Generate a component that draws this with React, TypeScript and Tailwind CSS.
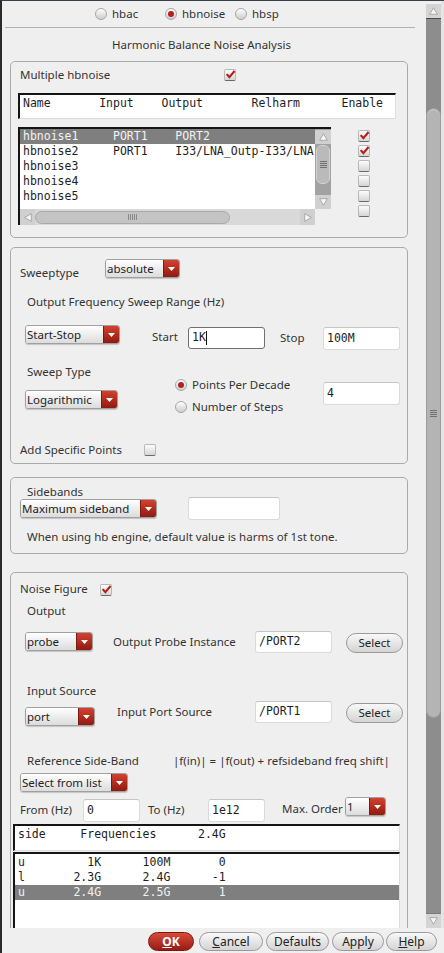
import React from 'react';

const sans = "font-['Noto_Sans',sans-serif] text-[11.5px] text-[#333333]";
const mono = "font-['DejaVu_Sans_Mono',monospace] text-[11.5px]";

function Check({ on = false, className = '' }: { on?: boolean; className?: string }) {
  return (
    <div
      className={`relative w-[12px] h-[12px] shrink-0 rounded-[2px] border border-[#b8b8b8] border-b-[#6a6a6a] bg-linear-to-b from-[#fcfcfc] to-[#d6d6d6] ${className}`}
    >
      {on && (
        <svg viewBox="0 0 12 12" className="absolute left-[0px] top-[-1px] w-[11px] h-[11px]">
          <path d="M1.8 5.6 L4.8 8.8 L10.4 2.2" stroke="#b3201a" strokeWidth="2.3" fill="none" />
        </svg>
      )}
    </div>
  );
}

function Radio({ on = false }: { on?: boolean }) {
  return (
    <div className="w-[12px] h-[12px] shrink-0 rounded-full border border-[#a6a6a6] bg-linear-to-b from-[#ffffff] to-[#cdcdcd] flex items-center justify-center">
      {on && <div className="w-[6px] h-[6px] rounded-full bg-[#b2231b]" />}
    </div>
  );
}

function Drop({ label, className = '' }: { label: string; className?: string }) {
  return (
    <div
      className={`flex h-[19px] shrink-0 rounded-[3px] border border-[#a0a0a0] shadow-[0_1px_1px_rgba(0,0,0,0.18)] overflow-hidden ${className}`}
    >
      <div className="flex-1 min-w-0 pl-[1px] leading-[17px] bg-linear-to-b from-[#ffffff] to-[#dcdcdc] text-[#222] whitespace-nowrap overflow-hidden">
        {label}
      </div>
      <div className="w-[16px] flex items-center justify-center bg-linear-to-b from-[#d4412f] to-[#901a10] border-l border-[#7a1a12]">
        <svg width="7" height="4" viewBox="0 0 7 4">
          <path d="M0 0 H7 L3.5 4 Z" fill="#ffffff" />
        </svg>
      </div>
    </div>
  );
}

function Field({ value = '', className = '', focus = false }: { value?: string; className?: string; focus?: boolean }) {
  return (
    <div
      className={`shrink-0 rounded-[3px] border bg-white flex items-center pl-[3px] text-[#1e1e1e] ${mono} ${
        focus ? 'border-[#707070]' : 'border-[#dadada] border-t-[#c4c4c4]'
      } ${className}`}
    >
      <span className="whitespace-pre">{value}</span>
      {focus && <span className="w-px h-[14px] bg-[#111]" />}
    </div>
  );
}

function Pill({ children, className = '' }: { children: React.ReactNode; className?: string }) {
  return (
    <div
      className={`shrink-0 rounded-full border border-[#9a9a9a] bg-linear-to-b from-[#f9f9f9] to-[#d4d4d4] flex items-center justify-center text-[#222] ${className}`}
    >
      {children}
    </div>
  );
}

function Panel({ className = '', children }: { className?: string; children: React.ReactNode }) {
  return (
    <div className={`ml-[8px] w-[398px] shrink-0 border border-[#aaaaaa] rounded-[5px] flex flex-col ${className}`}>
      {children}
    </div>
  );
}

function Grip() {
  return (
    <div className="flex flex-col gap-[1px]">
      <div className="w-[7px] h-px bg-[#707070]" />
      <div className="w-[7px] h-px bg-[#707070]" />
      <div className="w-[7px] h-px bg-[#707070]" />
      <div className="w-[7px] h-px bg-[#707070]" />
    </div>
  );
}

function UpArrow() {
  return (
    <svg width="9" height="8" viewBox="0 0 9 8">
      <path d="M4.5 0.8 L8.3 7.3 H0.7 Z" fill="#f7f7f7" stroke="#9a9a9a" strokeWidth="0.8" />
    </svg>
  );
}

function DownArrow() {
  return (
    <svg width="9" height="8" viewBox="0 0 9 8">
      <path d="M0.7 0.7 H8.3 L4.5 7.2 Z" fill="#f7f7f7" stroke="#9a9a9a" strokeWidth="0.8" />
    </svg>
  );
}

function MainScroll() {
  return (
    <div className="w-[15px] h-full pt-[3px] flex flex-col">
      <div className="h-[15px] shrink-0 bg-[#d4d4d4] border-b border-[#4a4a4a] flex items-center justify-center">
        <UpArrow />
      </div>
      <div className="flex-1 bg-[#8d8d8d] flex flex-col">
        <div className="mt-[89px] h-[610px] rounded-full bg-[#b4b4b4] border border-[#9c9c9c] shadow-[inset_0_1px_0_#d0d0d0] flex items-center justify-center">
          <Grip />
        </div>
      </div>
      <div className="h-[15px] shrink-0 bg-[#d4d4d4] border-t border-[#7a7a7a] flex items-center justify-center">
        <DownArrow />
      </div>
    </div>
  );
}

const hbRows = [
  'hbnoise1     PORT1    PORT2',
  'hbnoise2     PORT1    I33/LNA_Outp-I33/LNA',
  'hbnoise3',
  'hbnoise4',
  'hbnoise5',
];

const sideRows = [
  'u         1K      100M       0',
  'l       2.3G      2.4G      -1',
  'u       2.4G      2.5G       1',
];

function HbList() {
  return (
    <div className="ml-[7px] w-[313px] h-[98px] shrink-0 bg-white border-t-2 border-l-2 border-t-[#151515] border-l-[#151515] flex flex-col">
      <div className="flex flex-1 min-h-0">
        <div className={`flex-1 min-w-0 overflow-hidden text-[#1e1e1e] ${mono}`}>
          {hbRows.map((r, i) => (
            <div
              key={i}
              className={`h-[15px] leading-[15px] pl-[3px] whitespace-pre ${i === 0 ? 'bg-[#7f7f7f] text-[#f2f2f2]' : ''}`}
            >
              {r}
            </div>
          ))}
        </div>
        <div className="w-[16px] flex flex-col bg-[#a2a2a2]">
          <div className="h-[14px] mt-[1px] bg-[#d0d0d0] flex items-center justify-center">
            <UpArrow />
          </div>
          <div className="mt-[1px] mx-px h-[39px] rounded-[6px] bg-[#bababa] border border-[#d2d2d2] flex items-center justify-center">
            <Grip />
          </div>
          <div className="flex-1" />
          <div className="h-[14px] bg-[#d0d0d0] flex items-center justify-center">
            <DownArrow />
          </div>
        </div>
      </div>
      <div className="flex h-[16px]">
        <div className="flex-1 bg-[#d9d9d9] flex items-center">
          <div className="w-[15px] h-full bg-[#d0d0d0] flex items-center justify-center">
            <svg width="8" height="9" viewBox="0 0 8 9">
              <path d="M0.7 4.5 L7.3 0.7 V8.3 Z" fill="#f7f7f7" stroke="#9a9a9a" strokeWidth="0.8" />
            </svg>
          </div>
          <div className="w-[195px] h-[13px] rounded-full bg-[#c4c4c4] border border-[#a9a9a9] flex items-center justify-center gap-[1px]">
            <div className="w-px h-[6px] bg-[#8a8a8a]" />
            <div className="w-px h-[6px] bg-[#8a8a8a]" />
            <div className="w-px h-[6px] bg-[#8a8a8a]" />
            <div className="w-px h-[6px] bg-[#8a8a8a]" />
            <div className="w-px h-[6px] bg-[#8a8a8a]" />
          </div>
          <div className="flex-1" />
          <div className="w-[15px] h-full bg-[#d0d0d0] flex items-center justify-center">
            <svg width="8" height="9" viewBox="0 0 8 9">
              <path d="M7.3 4.5 L0.7 0.7 V8.3 Z" fill="#f7f7f7" stroke="#9a9a9a" strokeWidth="0.8" />
            </svg>
          </div>
        </div>
        <div className="w-[16px] bg-[#efefef]" />
      </div>
    </div>
  );
}

export default function App() {
  return (
    <div
      className={`w-[444px] h-[953px] overflow-hidden bg-[#efefef] border-l-2 border-t border-l-[#2a2a2a] border-t-[#34414d] flex flex-col ${sans}`}
    >
      <div className="flex h-[927px] shrink-0">
        <div className="w-[424px] h-full overflow-hidden flex flex-col">
          {/* analysis selector */}
          <div className="h-[26px] shrink-0 flex items-center pl-[93px]">
            <div className="w-[70px] flex items-center gap-[5px]">
              <Radio />
              <span>hbac</span>
            </div>
            <div className="w-[70px] flex items-center gap-[5px]">
              <Radio on />
              <span>hbnoise</span>
            </div>
            <div className="flex items-center gap-[5px]">
              <Radio />
              <span>hbsp</span>
            </div>
          </div>
          <div className="ml-[3px] w-[410px] h-px shrink-0 bg-[#b2b2b2]" />
          <div className="mt-[9px] w-[399px] leading-[16px] text-center shrink-0">Harmonic Balance Noise Analysis</div>

          {/* Multiple hbnoise */}
          <Panel className="mt-[8px] h-[177px]">
            <div className="mt-[5px] flex items-start">
              <div className="ml-[9px] w-[204px] leading-[16px] whitespace-nowrap">Multiple hbnoise</div>
              <Check on className="mt-[2px]" />
            </div>
            <div
              className={`mt-[10px] ml-[7px] w-[378px] h-[26px] shrink-0 bg-white border-t-2 border-l-2 border-r border-b border-t-[#151515] border-l-[#151515] border-r-[#dcdcdc] border-b-[#dcdcdc] pl-[3px] leading-[16px] whitespace-pre text-[#1e1e1e] ${mono}`}
            >
              {'Name       Input    Output       Relharm      Enable'}
            </div>
            <div className="mt-[8px] flex items-start">
              <HbList />
              <div className="ml-[27px] mt-[3px] flex flex-col gap-[3px]">
                <Check on />
                <Check on />
                <Check />
                <Check />
                <Check />
                <Check />
              </div>
            </div>
          </Panel>

          {/* Sweep */}
          <Panel className="mt-[9px] h-[217px]">
            <div className="mt-[11px] flex items-start">
              <div className="ml-[9px] w-[85px] mt-[6px] leading-[16px]">Sweeptype</div>
              <Drop label="absolute" className="w-[75px]" />
            </div>
            <div className="mt-[13px] ml-[16px] leading-[16px] whitespace-nowrap">Output Frequency Sweep Range (Hz)</div>
            <div className="mt-[15px] flex items-start">
              <Drop label="Start-Stop" className="ml-[14px] w-[95px]" />
              <div className="ml-[32px] w-[36px] mt-[4px] leading-[16px]">Start</div>
              <Field value="1K" focus className="w-[77px] h-[22px] mt-[2px]" />
              <div className="ml-[15px] w-[43px] mt-[5px] leading-[16px]">Stop</div>
              <Field value="100M" className="w-[77px] h-[23px] mt-[2px]" />
            </div>
            <div className="mt-[14px] flex items-start">
              <div className="w-[164px] flex flex-col">
                <div className="ml-[16px] leading-[16px]">Sweep Type</div>
                <Drop label="Logarithmic" className="ml-[14px] mt-[10px] w-[93px]" />
              </div>
              <div className="w-[148px] flex flex-col">
                <div className="mt-[13px] h-[16px] flex items-center gap-[5px]">
                  <Radio on />
                  <span className="whitespace-nowrap">Points Per Decade</span>
                </div>
                <div className="mt-[6px] h-[16px] flex items-center gap-[5px]">
                  <Radio />
                  <span className="whitespace-nowrap">Number of Steps</span>
                </div>
              </div>
              <Field value="4" className="w-[77px] h-[23px] mt-[18px]" />
            </div>
            <div className="mt-[27px] flex items-start">
              <div className="ml-[9px] w-[124px] leading-[16px] whitespace-nowrap">Add Specific Points</div>
              <Check className="mt-[2px]" />
            </div>
          </Panel>

          {/* Sidebands */}
          <Panel className="mt-[13px] h-[77px]">
            <div className="mt-[7px] ml-[16px] leading-[14px]">Sidebands</div>
            <div className="mt-[-2px] flex items-start">
              <Drop label="Maximum sideband" className="ml-[9px] mt-[2px] w-[137px]" />
              <Field className="ml-[31px] w-[92px] h-[23px]" />
            </div>
            <div className="mt-[9px] ml-[16px] leading-[16px] whitespace-nowrap">
              When using hb engine, default value is harms of 1st tone.
            </div>
          </Panel>

          {/* Noise figure */}
          <Panel className="mt-[18px] h-[420px]">
            <div className="mt-[8px] flex items-start">
              <div className="ml-[9px] w-[80px] leading-[16px] whitespace-nowrap">Noise Figure</div>
              <Check on className="mt-[3px]" />
            </div>
            <div className="mt-[6px] ml-[16px] leading-[16px]">Output</div>
            <div className="mt-[12px] flex items-start">
              <Drop label="probe" className="ml-[14px] mt-[1px] w-[68px]" />
              <div className="ml-[20px] w-[142px] mt-[3px] leading-[16px] whitespace-nowrap">Output Probe Instance</div>
              <Field value="/PORT2" className="w-[77px] h-[22px]" />
              <Pill className="ml-[14px] mt-[2px] w-[57px] h-[20px]">Select</Pill>
            </div>
            <div className="mt-[30px] ml-[16px] leading-[16px]">Input Source</div>
            <div className="mt-[2px] flex items-start">
              <Drop label="port" className="ml-[14px] mt-[6px] w-[70px]" />
              <div className="ml-[22px] w-[138px] mt-[3px] leading-[16px] whitespace-nowrap">Input Port Source</div>
              <Field value="/PORT1" className="w-[77px] h-[22px]" />
              <Pill className="ml-[14px] mt-[2px] w-[57px] h-[20px]">Select</Pill>
            </div>
            <div className="mt-[27px] flex items-start leading-[16px] whitespace-nowrap">
              <div className="ml-[16px] w-[146px]">Reference Side-Band</div>
              <div>|f(in)| = |f(out) + refsideband freq shift|</div>
            </div>
            <Drop label="Select from list" className="mt-[4px] ml-[9px] w-[108px]" />
            <div className="mt-[5px] flex items-start">
              <div className="ml-[9px] w-[63px] mt-[5px] leading-[16px] whitespace-nowrap">From (Hz)</div>
              <Field value="0" className="w-[57px] h-[23px] mt-[2px]" />
              <div className="ml-[8px] w-[60px] mt-[5px] leading-[16px] whitespace-nowrap">To (Hz)</div>
              <Field value="1e12" className="w-[57px] h-[23px] mt-[2px]" />
              <div className="ml-[17px] w-[63px] mt-[4px] leading-[16px] whitespace-nowrap">Max. Order</div>
              <Drop label="1" className="w-[41px]" />
            </div>
            <div
              className={`mt-[2px] ml-[2px] w-[387px] h-[27px] shrink-0 bg-white border-t-2 border-l-2 border-r border-b border-t-[#151515] border-l-[#151515] border-r-[#dcdcdc] border-b-[#dcdcdc] pl-[3px] leading-[16px] whitespace-pre text-[#1e1e1e] ${mono}`}
            >
              {'side     Frequencies      2.4G'}
            </div>
            <div
              className={`mt-[1px] ml-[2px] w-[387px] h-[90px] shrink-0 bg-white border-t-2 border-l-2 border-r border-t-[#151515] border-l-[#151515] border-r-[#dcdcdc] pt-px text-[#1e1e1e] ${mono}`}
            >
              {sideRows.map((r, i) => (
                <div
                  key={i}
                  className={`h-[15px] leading-[15px] pl-[3px] whitespace-pre ${i === 2 ? 'bg-[#7f7f7f] text-[#f2f2f2]' : ''}`}
                >
                  {r}
                </div>
              ))}
            </div>
          </Panel>
        </div>
        <MainScroll />
        <div className="w-[3px] bg-[#e4e4e4]" />
      </div>

      {/* dialog buttons */}
      <div className="h-[25px] shrink-0 flex items-start justify-end pt-[4px] pr-[7px] text-[12px]">
        <div className="w-[46px] h-[19px] rounded-full border border-[#7a1810] bg-linear-to-b from-[#d9493a] to-[#981b11] flex items-center justify-center text-white font-bold">
          <span>
            <span className="underline">O</span>K
          </span>
        </div>
        <Pill className="ml-[5px] w-[64px] h-[19px]">
          <span>
            <span className="underline">C</span>ancel
          </span>
        </Pill>
        <Pill className="ml-[3px] w-[63px] h-[19px]">Defaults</Pill>
        <Pill className="ml-[3px] w-[52px] h-[19px]">Apply</Pill>
        <Pill className="ml-[2px] w-[51px] h-[19px]">
          <span>
            <span className="underline">H</span>elp
          </span>
        </Pill>
      </div>
    </div>
  );
}
